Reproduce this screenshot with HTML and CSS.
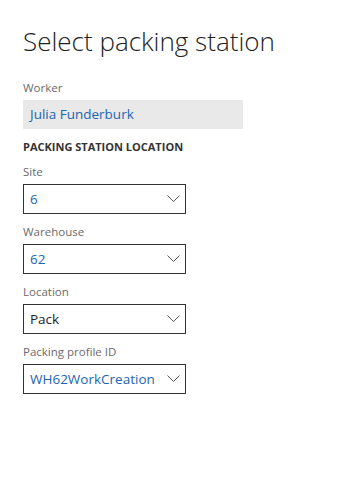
FILE: index.html
```html
<!DOCTYPE html>
<html lang="en">
<head>
    <meta charset="UTF-8">
    <meta name="viewport" content="width=device-width, initial-scale=1.0">
    <title>Select packing station</title>
    <link rel="stylesheet" href="styles.css">
</head>
<body>
    <div class="page">
        <h1>Select packing station</h1>

        <div class="field">
            <div class="field-label">Worker</div>
            <div class="readonly-box">Julia Funderburk</div>
        </div>

        <div class="section-title">PACKING STATION LOCATION</div>

        <div class="field">
            <div class="field-label">Site</div>
            <div class="select-box">
                <span class="value">6</span>
                <svg class="chevron" width="13" height="8" viewBox="0 0 13 8"><path d="M0.5 0.5 L6.5 6.5 L12.5 0.5" fill="none" stroke="#555" stroke-width="1"/></svg>
            </div>
        </div>

        <div class="field">
            <div class="field-label">Warehouse</div>
            <div class="select-box">
                <span class="value">62</span>
                <svg class="chevron" width="13" height="8" viewBox="0 0 13 8"><path d="M0.5 0.5 L6.5 6.5 L12.5 0.5" fill="none" stroke="#555" stroke-width="1"/></svg>
            </div>
        </div>

        <div class="field">
            <div class="field-label">Location</div>
            <div class="select-box">
                <span class="value dark">Pack</span>
                <svg class="chevron" width="13" height="8" viewBox="0 0 13 8"><path d="M0.5 0.5 L6.5 6.5 L12.5 0.5" fill="none" stroke="#555" stroke-width="1"/></svg>
            </div>
        </div>

        <div class="field">
            <div class="field-label">Packing profile ID</div>
            <div class="select-box">
                <span class="value">WH62WorkCreation</span>
                <svg class="chevron" width="13" height="8" viewBox="0 0 13 8"><path d="M0.5 0.5 L6.5 6.5 L12.5 0.5" fill="none" stroke="#555" stroke-width="1"/></svg>
            </div>
        </div>
    </div>
</body>
</html>
```

FILE: styles.css
```css
body {
    margin: 0;
    background-color: white;
    font-family: "Open Sans", "Noto Sans", sans-serif;
    color: #222;
}

.page {
    padding: 24px 23px;
}

h1 {
    margin: 0 0 22px 0;
    font-size: 26px;
    font-weight: 300;
    line-height: 34px;
    color: #222;
}

.field {
    margin-bottom: 10px;
}

.field-label {
    font-size: 11.5px;
    line-height: 16px;
    color: #6a6a6a;
    margin-bottom: 4px;
}

.readonly-box {
    width: 220px;
    height: 29px;
    box-sizing: border-box;
    padding-left: 7px;
    line-height: 29px;
    font-size: 13.5px;
    color: #1c64b4;
    background-color: #e9e9e9;
}

.section-title {
    font-size: 11px;
    font-weight: bold;
    line-height: 16px;
    color: #333;
    margin: 0 0 9px 0;
}

.select-box {
    width: 163px;
    height: 30px;
    box-sizing: border-box;
    border: 1px solid #333;
    padding: 0 5px 0 6px;
    display: flex;
    align-items: center;
    justify-content: space-between;
}

.select-box .value {
    font-size: 13.5px;
    color: #1c64b4;
}

.select-box .value.dark {
    color: #222;
}
```
